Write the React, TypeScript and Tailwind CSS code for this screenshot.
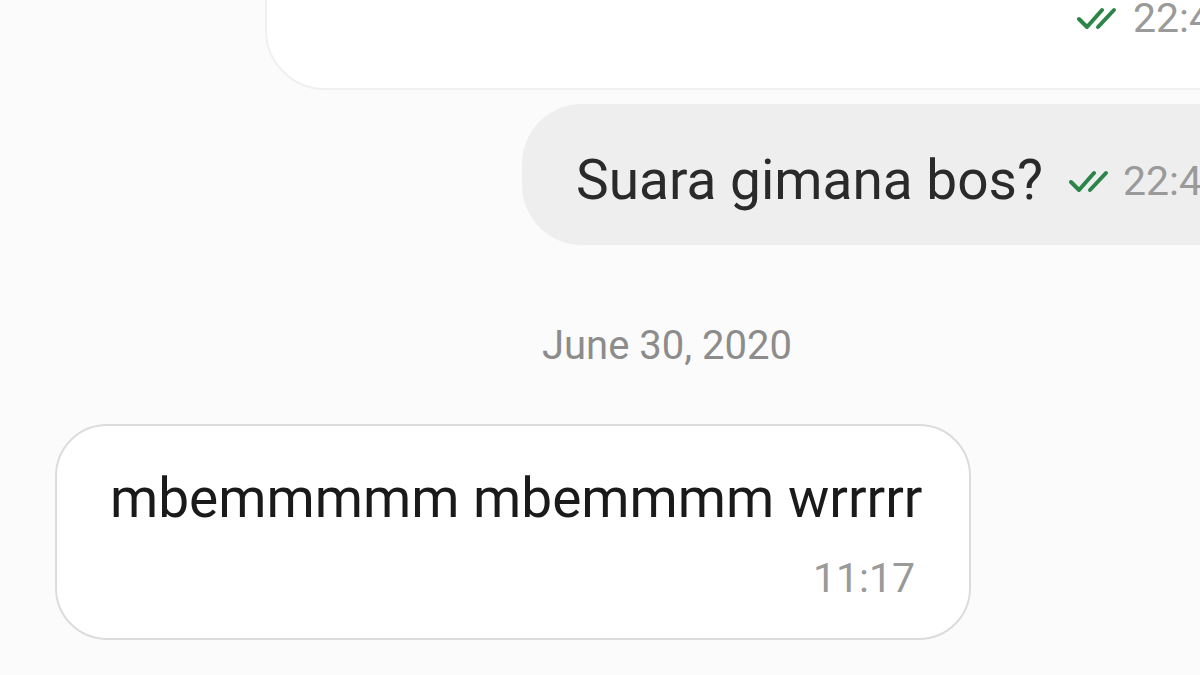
import React from 'react';

function DoubleCheck() {
	return (
		<svg width="40" height="24" viewBox="0 0 40 24" fill="none" className="shrink-0">
			<path d="M2 12 L10 20 L25 3" stroke="#2b8548" strokeWidth="4" strokeLinecap="round" strokeLinejoin="round" />
			<path d="M21 20 L37 3" stroke="#2b8548" strokeWidth="4" strokeLinecap="round" />
		</svg>
	);
}

export default function App() {
	return (
		<div
			className="w-[1200px] h-[675px] overflow-hidden bg-[#fbfbfb] flex flex-col"
			style={{ fontFamily: 'Roboto, "Noto Sans", sans-serif' }}
		>
			{/* Outgoing bubble, clipped at top */}
			<div className="self-end mr-[-80px] mt-[-110px] w-[1015px] h-[200px] rounded-[60px] bg-white border-2 border-[#f0f0f0] flex items-end justify-end pb-[49px] pr-[43px]">
				<div className="flex items-center gap-[16px]">
					<DoubleCheck />
					<span className="text-[41px] text-[#9a9a9a] leading-none">22:40</span>
				</div>
			</div>

			{/* Outgoing gray bubble */}
			<div className="self-end mr-[-80px] mt-[14px] w-[758px] h-[141px] rounded-[60px] bg-[#eeeeee] flex items-center pl-[54px]">
				<span className="text-[55px] text-[#2a2a2a] leading-none mt-[12px] whitespace-nowrap">Suara gimana bos?</span>
				<div className="flex items-center gap-[14px] ml-[26px] mt-[14px]">
					<DoubleCheck />
					<span className="text-[41px] text-[#9a9a9a] leading-none">22:40</span>
				</div>
			</div>

			{/* Date divider */}
			<div className="mt-[81px] flex justify-center">
				<span className="text-[40px] text-[#8c8c8c] leading-none ml-[134px]">June 30, 2020</span>
			</div>

			{/* Incoming bubble */}
			<div className="ml-[55px] mt-[58px] w-[916px] h-[216px] rounded-[52px] bg-white border-2 border-[#dcdcdc] flex flex-col items-end pt-[45px] pr-[54px]">
				<span className="text-[55px] text-[#1a1a1a] leading-none self-start ml-[53px] whitespace-nowrap">mbemmmmm mbemmmm wrrrrr</span>
				<span className="text-[41px] text-[#9a9a9a] leading-none mt-[32px]">11:17</span>
			</div>
		</div>
	);
}
